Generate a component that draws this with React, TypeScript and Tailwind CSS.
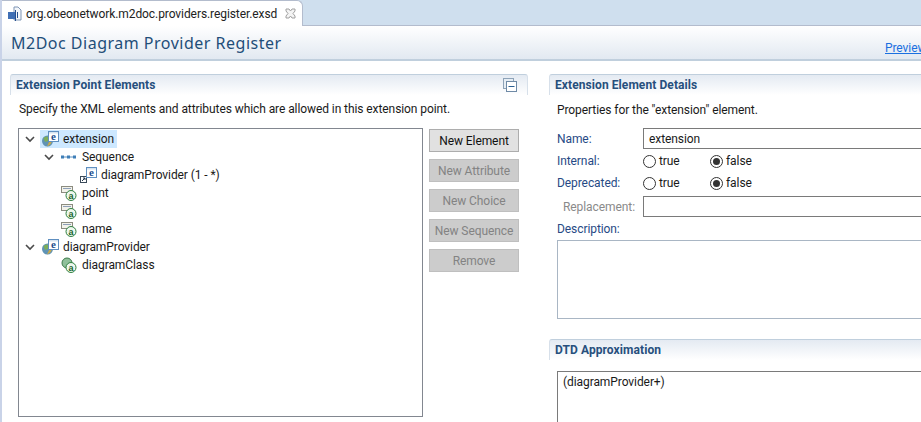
import { ReactNode } from 'react';

function Chevron() {
  return (
    <svg width="12" height="12" viewBox="0 0 12 12" className="shrink-0">
      <path d="M2 4 L6 8 L10 4" fill="none" stroke="#4a4a4a" strokeWidth="1.6" />
    </svg>
  );
}

function ElementIcon({ ref2 = false }: { ref2?: boolean }) {
  return (
    <svg width="17" height="16" viewBox="0 0 17 16" className="shrink-0">
      {ref2 ? (
        <g>
          <rect x="0.5" y="9.5" width="6" height="6" fill="#fff" stroke="#3a4a5a" />
          <path d="M2 14 L5 11 M3 11 H5 V13" stroke="#22364c" fill="none" />
        </g>
      ) : (
        <g>
          <circle cx="5.5" cy="10" r="5.5" fill="#5f93b5" />
          <path d="M1.5 7 Q4 4.5 7 6 L6 10 L3 11 Z" fill="#7cae5a" />
          <path d="M5 15.5 Q9 14 10 10 L7 11 Z" fill="#c9a94a" />
        </g>
      )}
      <rect x="6.5" y="0.5" width="10" height="10" fill="#fff" stroke="#5f8fc0" />
      <rect x="7" y="1" width="9" height="1.5" fill="#d5e3f0" />
      <text x="11.5" y="9" textAnchor="middle" fontSize="11" fontWeight="700" fontFamily="Liberation Serif, serif" fill="#1d4f8f">e</text>
    </svg>
  );
}

function AttrIcon({ global = false }: { global?: boolean }) {
  return (
    <svg width="17" height="16" viewBox="0 0 17 16" className="shrink-0">
      {global ? (
        <circle cx="6" cy="6" r="5" fill="#8fc09a" stroke="#3c7a4a" />
      ) : (
        <g>
          <rect x="0.5" y="1.5" width="11" height="6" fill="#f2f2ea" stroke="#8c8c80" />
          <rect x="2" y="3" width="8" height="1" fill="#8fa0b8" />
        </g>
      )}
      <circle cx="10" cy="10.5" r="5" fill="#eef7ee" stroke="#2e8040" />
      <text x="10" y="13.5" textAnchor="middle" fontSize="9" fontWeight="700" fontFamily="Liberation Sans, sans-serif" fill="#17622a">a</text>
    </svg>
  );
}

function SequenceIcon() {
  return (
    <svg width="17" height="16" viewBox="0 0 17 16" className="shrink-0">
      <path d="M1 8 H15" stroke="#5b8fc0" strokeWidth="1" />
      <rect x="0" y="6.5" width="3" height="3" fill="#3f7fb8" />
      <rect x="6" y="6.5" width="3" height="3" fill="#3f7fb8" />
      <rect x="12" y="6.5" width="3" height="3" fill="#3f7fb8" />
    </svg>
  );
}

function FileIcon() {
  return (
    <svg width="16" height="16" viewBox="0 0 16 16" className="shrink-0">
      <path d="M7 1 H11 L14 4 V14 H7 Z" fill="#f4f7fb" stroke="#7f95b5" />
      <rect x="1" y="6" width="7" height="7" fill="#3f6fb5" />
      <path d="M8.5 4 V15 M10.5 6 V12" stroke="#27508f" />
    </svg>
  );
}

function CollapseIcon() {
  return (
    <svg width="14" height="14" viewBox="0 0 14 14">
      <rect x="0.5" y="0.5" width="10" height="10" fill="#e6edf4" stroke="#8ea3b8" />
      <rect x="3.5" y="3.5" width="10" height="10" fill="#fff" stroke="#6f8aa6" />
      <path d="M5.5 8.5 H11.5" stroke="#2c5f92" strokeWidth="1" />
    </svg>
  );
}

function CloseIcon() {
  return (
    <svg width="11" height="11" viewBox="0 0 11 11">
      <path d="M1 1 H4 L5.5 3 L7 1 H10 V3 L8 5.5 L10 8 V10 H7 L5.5 8 L4 10 H1 V8 L3 5.5 L1 3 Z" fill="#f4f4f4" stroke="#a0a0a0" />
    </svg>
  );
}

function Row({ indent, chevron, icon, label, selected }: { indent: string; chevron?: boolean; icon: ReactNode; label: string; selected?: boolean }) {
  return (
    <div className={`flex h-[18px] items-center ${indent}`}>
      <div className="w-[16px] shrink-0">{chevron && <Chevron />}</div>
      <div className={`flex h-[18px] items-center pr-[3px] ${selected ? 'bg-[#cde8ff]' : ''}`}>
        <div className="mr-[4px] pl-[2px]">{icon}</div>
        <span className="whitespace-nowrap">{label}</span>
      </div>
    </div>
  );
}

function ActionButton({ label, enabled }: { label: string; enabled?: boolean }) {
  return (
    <div className={`flex h-[23px] w-[90px] items-center justify-center border ${enabled ? 'border-[#adadad] bg-[#e1e1e1] text-[#111]' : 'border-[#bfbfbf] bg-[#cccccc] text-[#838383]'}`}>
      {label}
    </div>
  );
}

function SectionTitle({ children, action }: { children: ReactNode; action?: ReactNode }) {
  return (
    <div className="flex h-[21px] shrink-0 items-center justify-between rounded-tl-[3px] rounded-tr-[3px] border-t border-l border-r border-t-[#c0cfdd] border-l-[#d7e0ea] border-r-[#d7e0ea] bg-gradient-to-b from-[#e4eaf2] to-white pl-[5px] pr-[10px] font-bold tracking-[0.08px] text-[#274f7d]">
      <span className="whitespace-nowrap">{children}</span>
      {action}
    </div>
  );
}

function Radio({ checked }: { checked?: boolean }) {
  return (
    <span className="flex h-[13px] w-[13px] shrink-0 items-center justify-center rounded-full border border-[#333] bg-white">
      {checked && <span className="h-[7px] w-[7px] rounded-full bg-[#333]" />}
    </span>
  );
}

function RadioPair({ label }: { label: string }) {
  return (
    <div className="flex h-[22px] items-center">
      <span className="w-[86px] shrink-0 text-[#274a85]">{label}</span>
      <div className="flex w-[67px] items-center gap-[3px]"><Radio /><span>true</span></div>
      <div className="flex items-center gap-[3px]"><Radio checked /><span>false</span></div>
    </div>
  );
}

export default function App() {
  return (
    <div className="flex h-[422px] w-[921px] flex-col overflow-hidden border-l-2 border-[#c9d3e8] bg-white font-['Roboto','Noto_Sans',sans-serif] text-[12px] leading-[16px] tracking-[-0.08px] text-[#1a1a1a]">
      {/* Tab strip */}
      <div className="flex h-[26px] shrink-0 items-end border-b border-[#b3bccd] bg-[#cfdfee]">
        <div className="-mb-[1px] flex h-[26px] w-[301px] items-center rounded-tr-[6px] border-r border-t border-[#b3bccd] bg-white pl-[5px]">
          <FileIcon />
          <span className="ml-[3px] whitespace-nowrap text-[#222]">org.obeonetwork.m2doc.providers.register.exsd</span>
          <span className="ml-[8px] flex"><CloseIcon /></span>
        </div>
      </div>

      {/* Form header */}
      <div className="flex h-[35px] shrink-0 items-center justify-between border-b-2 border-[#c0cfdd] bg-gradient-to-b from-white to-[#e2e9f1] pl-[9px]">
        <span className="whitespace-nowrap font-['Noto_Sans',sans-serif] text-[16px] tracking-[0.5px] text-[#1f4e79]">M2Doc Diagram Provider Register</span>
        <span className="mt-[10px] w-[36px] overflow-hidden whitespace-nowrap text-[#1a6fe0] underline">Preview</span>
      </div>

      <div className="flex min-h-0 flex-1 overflow-hidden pl-[8px] pt-[13px]">
        {/* Extension Point Elements */}
        <div className="flex w-[518px] shrink-0 flex-col">
          <SectionTitle action={<CollapseIcon />}>Extension Point Elements</SectionTitle>
          <div className="whitespace-nowrap pl-[9px] pt-[6px]">Specify the XML elements and attributes which are allowed in this extension point.</div>
          <div className="mt-[11px] flex flex-1 pl-[8px]">
            <div className="h-[289px] w-[405px] shrink-0 border border-[#828790] pl-[5px] pt-[1px]">
              <Row indent="" chevron selected icon={<ElementIcon />} label="extension" />
              <Row indent="pl-[19px]" chevron icon={<SequenceIcon />} label="Sequence" />
              <Row indent="pl-[38px]" icon={<ElementIcon ref2 />} label="diagramProvider (1 - *)" />
              <Row indent="pl-[19px]" icon={<AttrIcon />} label="point" />
              <Row indent="pl-[19px]" icon={<AttrIcon />} label="id" />
              <Row indent="pl-[19px]" icon={<AttrIcon />} label="name" />
              <Row indent="" chevron icon={<ElementIcon />} label="diagramProvider" />
              <Row indent="pl-[19px]" icon={<AttrIcon global />} label="diagramClass" />
            </div>
            <div className="ml-[6px] flex flex-col gap-[7px] pt-[1px]">
              <ActionButton enabled label="New Element" />
              <ActionButton label="New Attribute" />
              <ActionButton label="New Choice" />
              <ActionButton label="New Sequence" />
              <ActionButton label="Remove" />
            </div>
          </div>
        </div>

        {/* Extension Element Details */}
        <div className="ml-[21px] flex w-[400px] shrink-0 flex-col">
          <SectionTitle>Extension Element Details</SectionTitle>
          <div className="pl-[8px]">
            <div className="whitespace-nowrap pt-[7px]">Properties for the "extension" element.</div>
            <div className="mt-[10px] flex h-[21px] items-center">
              <span className="w-[86px] shrink-0 text-[#274a85]">Name:</span>
              <div className="flex h-[21px] flex-1 items-center border border-[#7a7a7a] pl-[5px]">extension</div>
            </div>
            <div className="mt-[1px]"><RadioPair label="Internal:" /></div>
            <RadioPair label="Deprecated:" />
            <div className="mt-[2px] flex h-[21px] items-center">
              <span className="w-[86px] shrink-0 pl-[6px] text-[#8a8a8a]">Replacement:</span>
              <div className="h-[21px] flex-1 border border-[#7a7a7a]" />
            </div>
            <div className="mt-[4px] text-[#274a85]">Description:</div>
            <div className="mt-[3px] h-[79px] shrink-0 border border-[#a9b6c4]" />
          </div>
          <div className="mt-[20px]">
            <SectionTitle>DTD Approximation</SectionTitle>
          </div>
          <div className="ml-[8px] mt-[11px] h-[80px] shrink-0 border border-[#7a7a7a] pl-[5px] pt-[2px]">(diagramProvider+)</div>
        </div>
      </div>
    </div>
  );
}
